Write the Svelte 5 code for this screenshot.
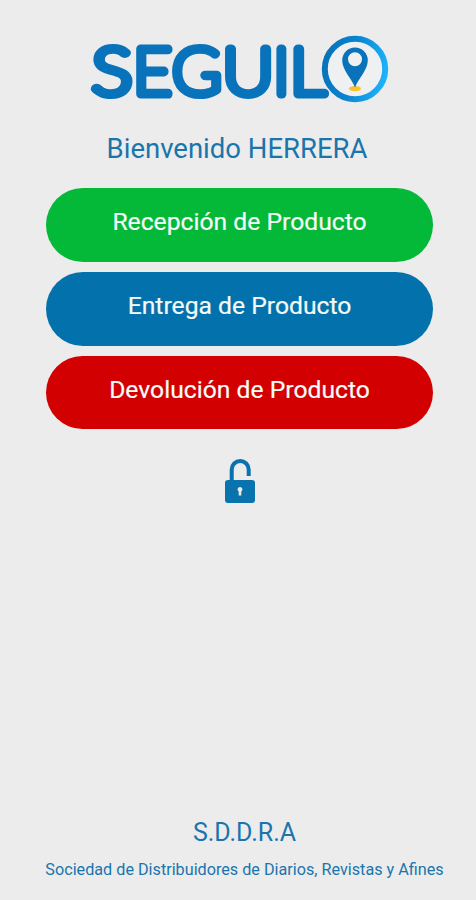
<script lang="ts">
  interface Action {
    id: string;
    label: string;
  }

  interface Props {
    user?: string;
    onSelect?: (id: string) => void;
  }

  let { user = 'HERRERA', onSelect }: Props = $props();

  // Each letter is placed and widened on its own, the wordmark is wider than Lato
  const letters = [
    { char: 'S', x: 1.9, scale: 1.17 },
    { char: 'E', x: 43.3, scale: 1.02 },
    { char: 'G', x: 82.3, scale: 1.03 },
    { char: 'U', x: 132.4, scale: 1.1 },
    { char: 'I', x: 183.6, scale: 1 },
    { char: 'L', x: 200.3, scale: 1.08 },
  ];

  const actions: Action[] = [
    { id: 'reception', label: 'Recepción de Producto' },
    { id: 'delivery', label: 'Entrega de Producto' },
    { id: 'return', label: 'Devolución de Producto' },
  ];

  let locked = $state(false);
</script>

<main class="home">
  <svg class="logo" viewBox="0 0 300 70" role="img" aria-label="SEGUILO">
    <defs>
      <linearGradient id="ring" x1="0" y1="0.4" x2="1" y2="0.6">
        <stop offset="0" stop-color="#0873bb" />
        <stop offset="0.45" stop-color="#0a84d0" />
        <stop offset="1" stop-color="#1cb2fa" />
      </linearGradient>
    </defs>
    <!-- thin letters with a thick round stroke give the rounded terminals -->
    {#each letters as { char, x, scale } (char)}
      <text class="wordmark" transform="translate({x} 59.3) scale({scale} 1)">{char}</text>
    {/each}
    <circle cx="265" cy="34" r="30.2" fill="#eef0f1" stroke="url(#ring)" stroke-width="6" />
    <ellipse cx="265" cy="53.7" rx="6" ry="2.6" fill="#f9c22e" />
    <path
      fill="#0873bb"
      fill-rule="evenodd"
      d="M265 52.5C262 44 252.2 35 252.2 25.2a12.8 12.8 0 0 1 25.6 0C277.8 35 268 44 265 52.5ZM265 17.3a7 7 0 1 0 0 14a7 7 0 0 0 0-14Z"
    />
  </svg>

  <h1 class="welcome">Bienvenido {user}</h1>

  <nav class="actions">
    {#each actions as action (action.id)}
      <button type="button" class="btn {action.id}" onclick={() => onSelect?.(action.id)}>
        {action.label}
      </button>
    {/each}
  </nav>

  <button
    type="button"
    class="lock"
    aria-label="Bloquear"
    aria-pressed={locked}
    onclick={() => (locked = !locked)}
  >
    <svg viewBox="0 0 30 44" width="30" height="44">
      <path
        d={locked ? 'M6.7 23V10.5a8.3 8.3 0 0 1 16.6 0V23' : 'M6.7 23V10.5a8.5 8.5 0 0 1 17 0V17'}
        fill="none"
        stroke="#0873ad"
        stroke-width="4"
      />
      <rect x="0" y="21" width="30" height="23" rx="3" fill="#0873ad" />
      <path d="M15 28a2.5 2.5 0 0 1 1.3 4.6V36.5h-2.6V32.6A2.5 2.5 0 0 1 15 28Z" fill="#ececec" />
    </svg>
  </button>

  <footer class="footer">
    <p class="acronym">S.D.D.R.A</p>
    <p class="company">Sociedad de Distribuidores de Diarios, Revistas y Afines</p>
  </footer>
</main>

<style>
  :global(body) {
    background: #ececec;
  }

  .home {
    box-sizing: border-box;
    height: 900px;
    padding: 35px 43px 19px 46px;
    display: flex;
    flex-direction: column;
    align-items: center;
    background: #ececec;
    color: #1a75ad;
    font-family: Roboto, sans-serif;
  }

  .logo {
    flex: none;
    width: 300px;
    height: 70px;
    overflow: visible;
  }

  .wordmark {
    font-family: Lato, sans-serif;
    font-size: 64.6px;
    font-weight: 100;
    fill: #0873bb;
    stroke: #0873bb;
    stroke-width: 9.2px;
    stroke-linejoin: round;
  }

  .welcome {
    margin: 27px 5px 0 0;
    font-size: 27.5px;
    font-weight: 400;
    line-height: 34px;
    white-space: nowrap;
  }

  .actions {
    align-self: stretch;
    margin-top: 22px;
    display: flex;
    flex-direction: column;
    gap: 10px;
  }

  .btn {
    height: 73.8px;
    padding: 0 0 5px;
    border: 0;
    border-radius: 37px;
    color: #f4fbf8;
    font: 400 24.7px/30px Roboto, sans-serif;
    -webkit-text-stroke: 0.2px currentColor;
    cursor: pointer;
  }
  .btn.reception {
    background: #03b937;
  }
  .btn.delivery {
    background: #0371ab;
  }
  .btn.return {
    background: #d20000;
  }

  .lock {
    margin-top: 30px;
    padding: 0;
    border: 0;
    background: none;
    line-height: 0;
    cursor: pointer;
  }

  .footer {
    margin-top: auto;
    padding-left: 10px;
    text-align: center;
    white-space: nowrap;
  }

  .acronym {
    margin: 0 0 11px;
    font-size: 25px;
    line-height: 30px;
  }

  .company {
    margin: 0;
    font-size: 16.2px;
    line-height: 22px;
  }
</style>
